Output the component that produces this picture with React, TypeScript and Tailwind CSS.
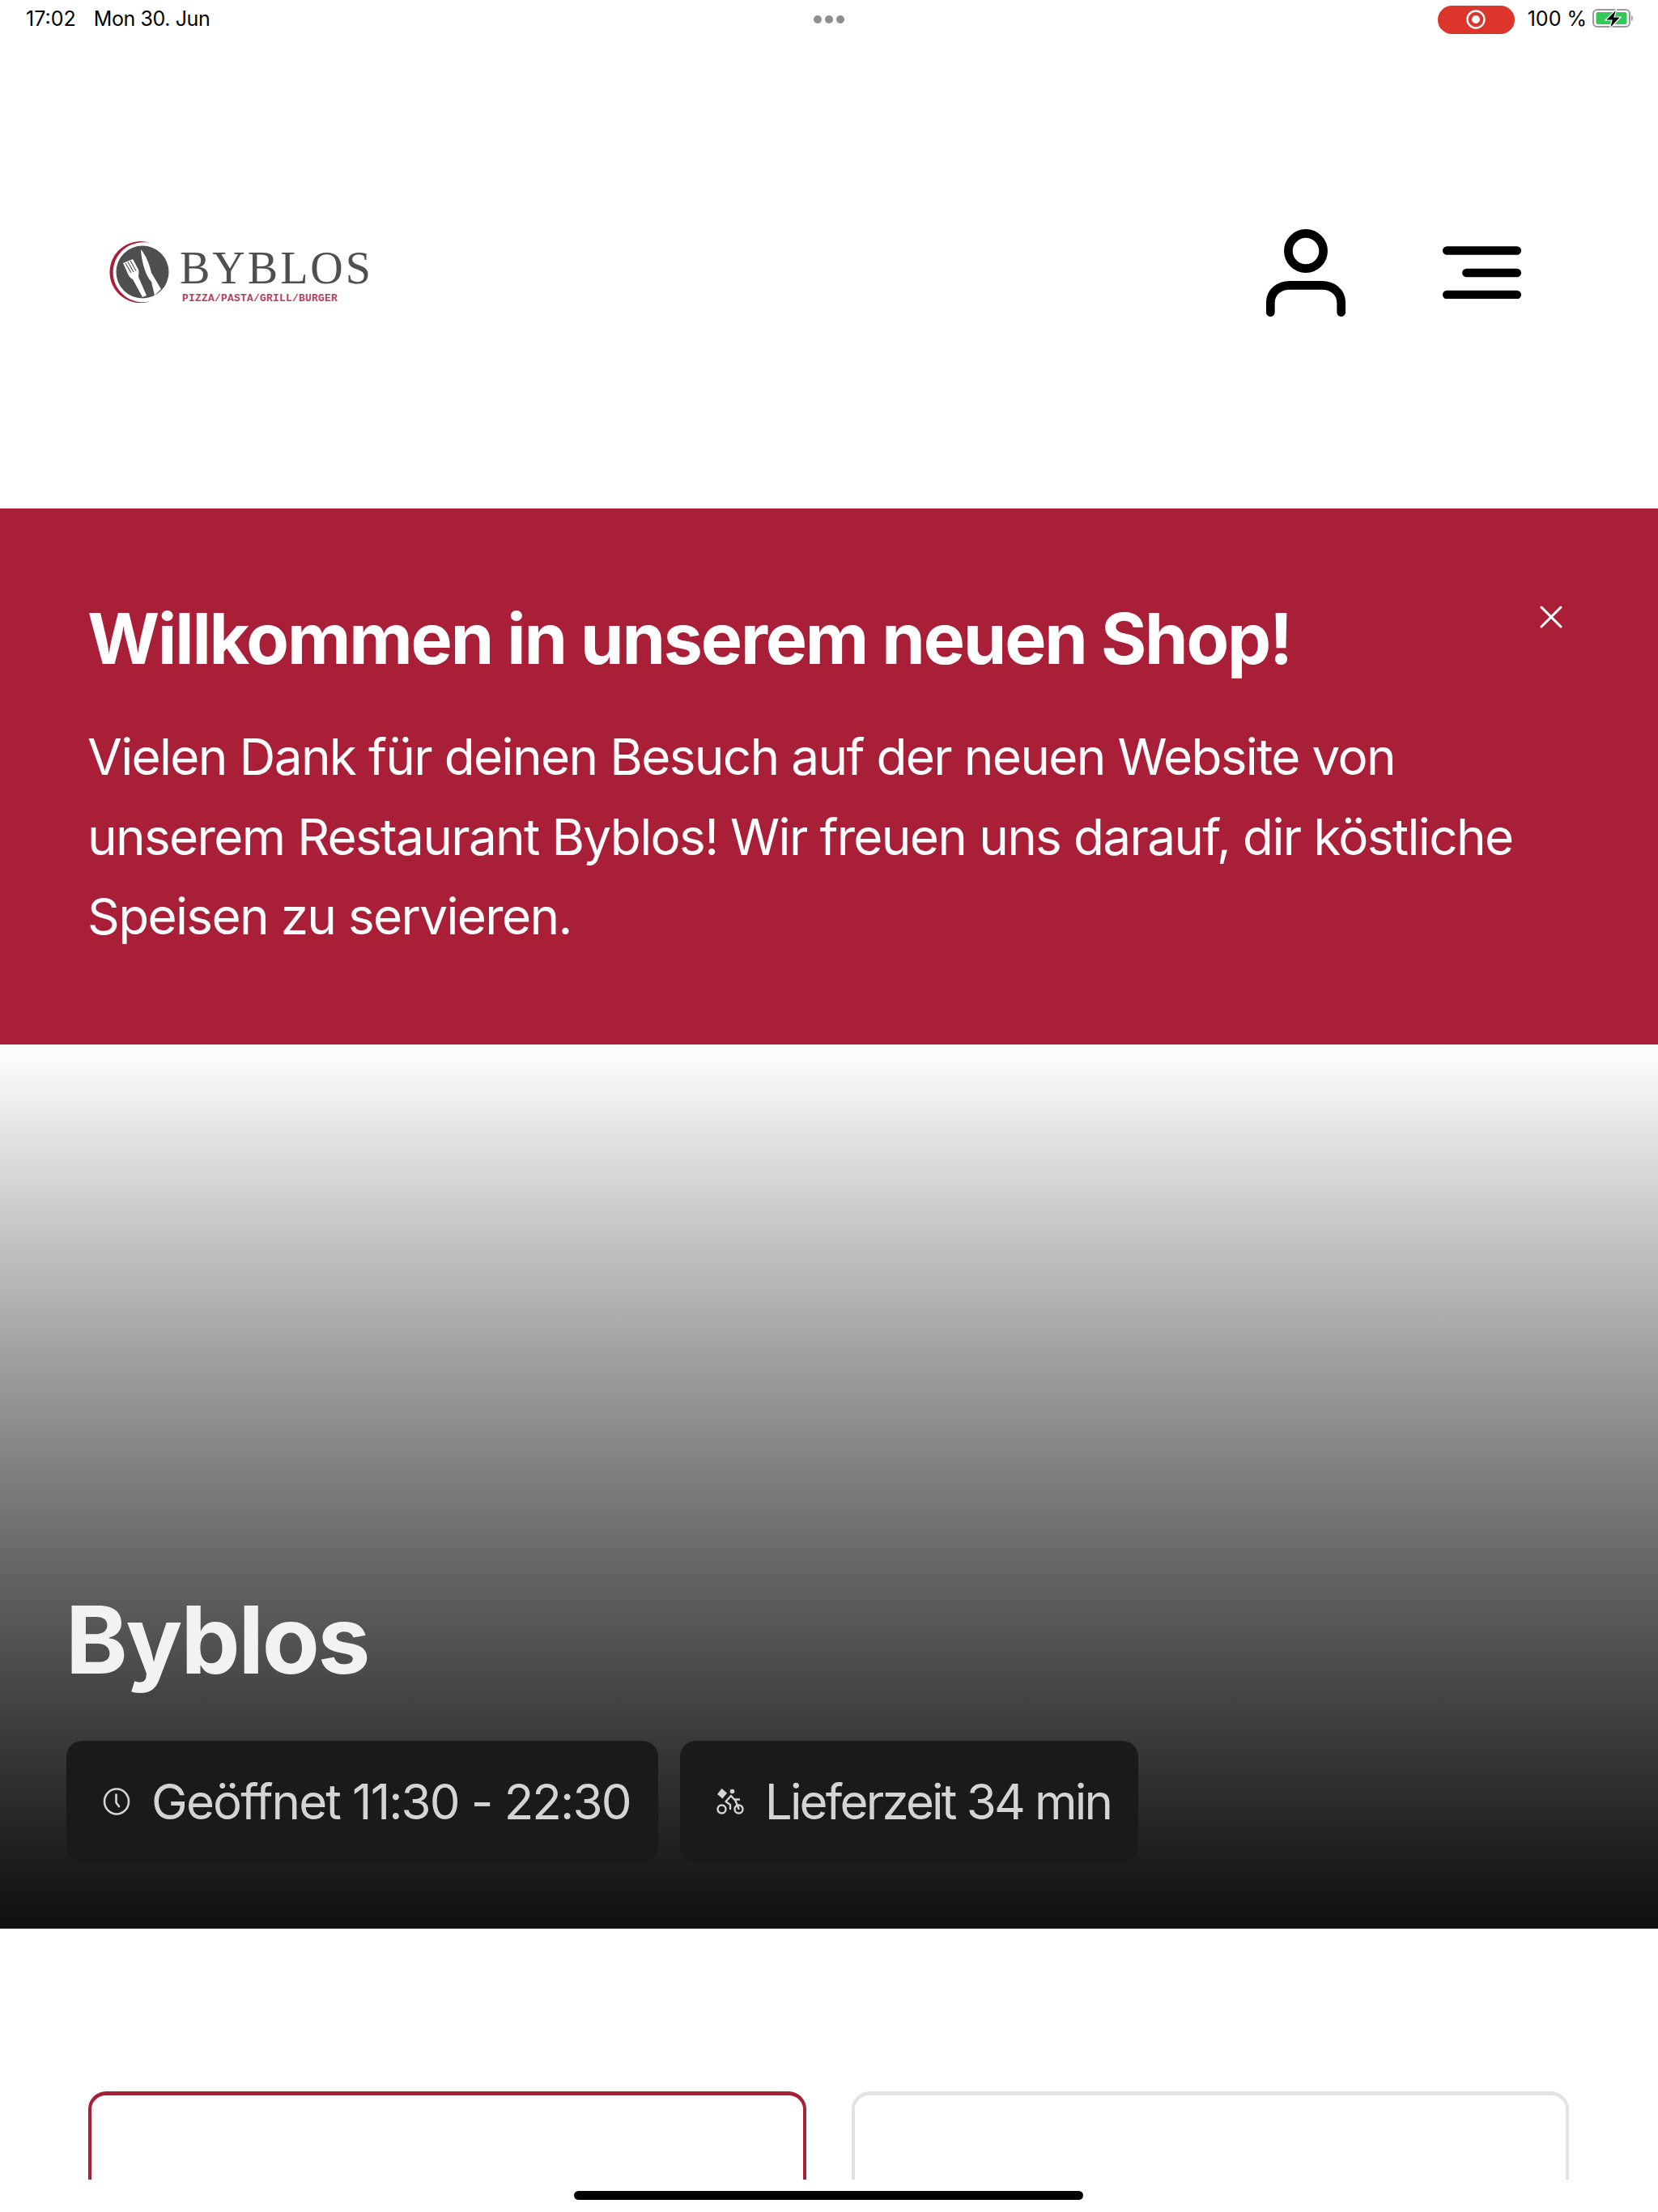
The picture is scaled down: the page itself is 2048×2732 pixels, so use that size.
function ClockIcon() {
  return (
    <svg width="34" height="34" viewBox="0 0 34 34" fill="none" stroke="#d4d4d4" strokeWidth="2.6" strokeLinecap="round" strokeLinejoin="round">
      <ellipse cx="17" cy="17" rx="15" ry="15.5" />
      <path d="M16.5 8.5 V18.5 L20 23" />
    </svg>
  );
}

function RiderIcon() {
  return (
    <svg width="34" height="34" viewBox="0 0 34 34" fill="none" stroke="#d4d4d4" strokeWidth="2.4" strokeLinecap="round" strokeLinejoin="round">
      <path d="M6.5 1 L13 6.5 L7.5 13.5 L1 8 Z" fill="#d4d4d4" stroke="none" />
      <circle cx="19.5" cy="4.5" r="2.8" fill="#d4d4d4" stroke="none" />
      <circle cx="6.5" cy="26.5" r="5" />
      <circle cx="27.5" cy="26.5" r="5" />
      <path d="M18 10 L11.5 17 L17 21 V26 M18 10 L22 14.5 H28 M23 15 L27.5 26" />
    </svg>
  );
}

function Logo() {
  return (
    <div className="flex items-start gap-[10px] -ml-[1px]">
      <svg width="80" height="82" viewBox="0 0 80 82">
        <circle cx="44" cy="40" r="32.5" fill="#4d4f50" />
        <path d="M56 5 A38 38 0 1 0 54 76 A37 37 0 1 1 56 5 Z" fill="#a91f37" />
        <path d="M42 12 C49 20 53 32 55 41 L67 61 L59 69 L55 52 C49 46 43 30 42 12 Z" fill="#fff" />
        <path d="M20 29 L32 24 L39 37 C40 41 39 45 39 46 L49 69 L44 71 L32 49 C28 47 26 43 25 40 Z" fill="#fff" />
        <path d="M23 29 L30 41 M26 27.5 L33 40 M29 26 L36 38.5" stroke="#4d4f50" strokeWidth="1.1" />
      </svg>
      <div className="flex flex-col pt-[6px]">
        <span className="font-['Liberation_Serif',serif] text-[56px] leading-[58px] tracking-[3px] text-[#4d4f50]">BYBLOS</span>
        <span className="font-['Liberation_Mono',monospace] font-bold text-[13px] leading-[14px] tracking-[0.2px] text-[#b8405a] pl-[3px] pt-[2px]">PIZZA/PASTA/GRILL/BURGER</span>
      </div>
    </div>
  );
}

function InfoPill({ icon, text, className }: { icon: React.ReactNode; text: string; className: string }) {
  return (
    <div className="h-[150px] rounded-[20px] bg-[#1a1a1a] flex items-center pl-[45px] pr-[34px] gap-[26px]">
      {icon}
      <span className={"text-[60px] text-[#d4d4d4] " + className}>{text}</span>
    </div>
  );
}

export default function App() {
  return (
    <div className="relative w-[2048px] h-[2732px] bg-white overflow-hidden font-['Inter',sans-serif]">
      {/* status bar */}
      <div className="h-[48px] flex items-center justify-between pl-[32px] pr-[29px] text-[25px] text-black">
        <div className="flex gap-[22px] w-[700px]">
          <span>17:02</span>
          <span className="tracking-[-0.4px]">Mon 30. Jun</span>
        </div>
        <div className="flex gap-[4px] -ml-[3px]">
          <div className="w-[10px] h-[10px] rounded-full bg-[#8e8e8e]" />
          <div className="w-[10px] h-[10px] rounded-full bg-[#8e8e8e]" />
          <div className="w-[10px] h-[10px] rounded-full bg-[#8e8e8e]" />
        </div>
        <div className="flex items-center justify-end gap-[16px] w-[700px]">
          <div className="w-[95px] h-[35px] rounded-full bg-[#dc352c] flex items-center justify-center">
            <svg width="26" height="26" viewBox="0 0 26 26">
              <circle cx="13" cy="13" r="10.5" fill="none" stroke="#fff" strokeWidth="2.4" />
              <circle cx="13" cy="13" r="5" fill="#fff" />
            </svg>
          </div>
          <div className="flex items-center gap-[7px]">
            <span>100 %</span>
            <svg width="52" height="26" viewBox="0 0 52 26">
              <rect x="1" y="1" width="45" height="21" rx="5" fill="none" stroke="#9a9a9a" strokeWidth="2" />
              <rect x="4.5" y="4" width="38" height="15" rx="2.5" fill="#35c759" />
              <path d="M48 8 C50.5 9 50.5 14 48 15 Z" fill="#9a9a9a" />
              <path d="M30 0 L16 14 H24 L21 25 L35 10 H27 Z" fill="#000" stroke="#fff" strokeWidth="1.2" />
            </svg>
          </div>
        </div>
      </div>

      {/* header */}
      <div className="h-[580px] flex items-start justify-between pl-[133px] pr-[169px] pt-[235px]">
        <div className="mt-[13px]"><Logo /></div>
        <div className="flex items-start gap-[120px]">
          <svg width="98" height="108" viewBox="0 0 98 108" fill="none" stroke="#000" strokeWidth="10.7" strokeLinecap="round">
            <circle cx="49" cy="27" r="21.6" />
            <path d="M5.3 102.7 V91 C5.3 77 17 69.3 29 69.3 H69 C81 69.3 92.7 77 92.7 91 V102.7" />
          </svg>
          <svg width="97" height="65" viewBox="0 0 97 65" className="mt-[21px]" fill="none" stroke="#000" strokeWidth="10.7" strokeLinecap="round">
            <path d="M5.3 5.5 H91.7 M29.5 33 H91.7 M5.3 60 H91.7" />
          </svg>
        </div>
      </div>

      {/* welcome banner */}
      <div className="relative h-[662px] bg-[#a91f37] text-white pl-[108px] pr-[140px] pt-[111px]">
        <h1 className="text-[86px] leading-[100px] font-bold tracking-[-2.15px]">Willkommen in unserem neuen Shop!</h1>
        <p className="mt-[47px] text-[62px] leading-[98.5px] tracking-[-1.65px]">
          Vielen Dank für deinen Besuch auf der neuen Website von unserem Restaurant Byblos! Wir freuen uns darauf, dir köstliche Speisen zu servieren.
        </p>
        <svg width="28" height="28" viewBox="0 0 28 28" className="absolute left-[1902px] top-[120px]" stroke="#fff" strokeWidth="3" strokeLinecap="round">
          <path d="M2 2 L26 26 M26 2 L2 26" />
        </svg>
      </div>

      {/* hero */}
      <div className="h-[1092px] bg-gradient-to-b from-white to-[#0f0f0f] flex flex-col justify-end pl-[82px] pb-[82px]">
        <h2 className="text-[116px] leading-[130px] font-bold text-[#f2f2f2] mb-[60px] -ml-[1px] tracking-[-2.2px]">Byblos</h2>
        <div className="flex gap-[27px]">
          <InfoPill icon={<ClockIcon />} text="Geöffnet 11:30 - 22:30" className="tracking-[-1.85px]" />
          <InfoPill icon={<RiderIcon />} text="Lieferzeit 34 min" className="tracking-[-2.8px]" />
        </div>
      </div>

      {/* fulfilment cards, cut off at the bottom of the view */}
      <div className="h-[310px] overflow-hidden pt-[201px] pl-[109px] pr-[110px] flex gap-[56px] items-start">
        <div className="flex-1 h-[200px] rounded-t-[22px] border-[4px] border-t-[5px] border-[#a91f37] bg-white" />
        <div className="flex-1 h-[200px] rounded-t-[22px] border-[4px] border-t-[5px] border-[#e3e3e3] bg-white" />
      </div>
      <div className="absolute left-0 top-[2692px] w-full h-[40px] bg-white" />
      <div className="absolute left-[709px] top-[2706px] w-[629px] h-[11px] rounded-full bg-black" />
    </div>
  );
}
